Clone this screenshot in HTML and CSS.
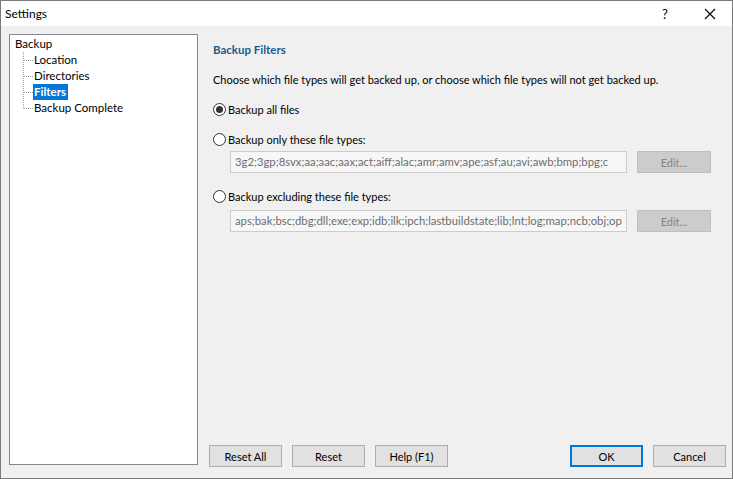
FILE: index.html
```html
<!DOCTYPE html>
<html>
<head>
<meta charset="utf-8">
<link rel="stylesheet" href="styles.css">
</head>
<body>
<div class="window">
  <div class="titlebar">
    <span class="title">Settings</span>
    <span class="help-btn">?</span>
    <span class="close-btn">
      <svg width="12" height="12" viewBox="0 0 12 12"><path d="M1 1L11 11M11 1L1 11" stroke="#000" stroke-width="1.1" fill="none"/></svg>
    </span>
  </div>
  <div class="body">
    <div class="tree">
      <div class="node root">Backup</div>
      <div class="children">
        <div class="node child"><span class="hline"></span><span class="lbl">Location</span></div>
        <div class="node child"><span class="hline"></span><span class="lbl">Directories</span></div>
        <div class="node child"><span class="hline"></span><span class="lbl selected">Filters</span></div>
        <div class="node child last"><span class="hline"></span><span class="lbl">Backup Complete</span></div>
      </div>
    </div>
    <div class="panel">
      <div class="content">
        <div class="heading">Backup Filters</div>
        <div class="desc">Choose which file types will get backed up, or choose which file types will not get backed up.</div>
        <div class="radio-row r1"><span class="radio checked"></span><span>Backup all files</span></div>
        <div class="radio-row r2"><span class="radio"></span><span>Backup only these file types:</span></div>
        <div class="field-row f1">
          <div class="textbox">3g2;3gp;8svx;aa;aac;aax;act;aiff;alac;amr;amv;ape;asf;au;avi;awb;bmp;bpg;c</div>
          <div class="btn disabled">Edit...</div>
        </div>
        <div class="radio-row r3"><span class="radio"></span><span>Backup excluding these file types:</span></div>
        <div class="field-row f2">
          <div class="textbox">aps;bak;bsc;dbg;dll;exe;exp;idb;ilk;ipch;lastbuildstate;lib;lnt;log;map;ncb;obj;op</div>
          <div class="btn disabled">Edit...</div>
        </div>
      </div>
      <div class="footer">
        <div class="btn">Reset All</div>
        <div class="btn">Reset</div>
        <div class="btn">Help (F1)</div>
        <div class="spacer"></div>
        <div class="btn default">OK</div>
        <div class="btn">Cancel</div>
      </div>
    </div>
  </div>
</div>
</body>
</html>
```
FILE: styles.css
```css
* { box-sizing: border-box; }
html, body { margin: 0; padding: 0; }
body {
  font-family: "Lato", "Liberation Sans", sans-serif;
  font-size: 11px;
  color: #000;
  background: #fff;
}
.window {
  width: 733px;
  height: 479px;
  border: 1px solid #7a7a7a;
  display: flex;
  flex-direction: column;
  overflow: hidden;
}
.titlebar {
  height: 25px;
  background: #fff;
  display: flex;
  align-items: center;
  flex-shrink: 0;
}
.title {
  padding-left: 4px;
  font-size: 12px;
  flex: 1;
}
.help-btn {
  width: 14px;
  font-size: 13px;
  margin-right: 32px;
  text-align: center;
}
.close-btn {
  width: 12px;
  height: 12px;
  margin-right: 16px;
  display: flex;
}
.body {
  flex: 1;
  background: #f0f0f0;
  display: flex;
  padding: 8px 6px 10px 8px;
  min-width: 0;
}
.tree {
  width: 189px;
  flex-shrink: 0;
  margin-bottom: 3px;
  background: #fff;
  border: 1px solid #828790;
  padding: 1px 0 0 5px;
  line-height: 16px;
  font-size: 11.5px;
}
.node { height: 16px; white-space: nowrap; }
.children {
  margin-left: 8px;
  position: relative;
}
.children::before {
  content: "";
  position: absolute;
  left: 0;
  top: 0;
  height: 57px;
  border-left: 1px dotted #a0a0a0;
}
.child { display: flex; align-items: center; }
.hline {
  width: 9px;
  margin-left: 1px;
  border-top: 1px dotted #a0a0a0;
}
.lbl { padding: 0 1px; }
.selected {
  background: #0078d7;
  color: #fff;
  font-weight: bold;
  padding: 0 2px 0 1px;
}
.panel {
  flex: 1;
  min-width: 0;
  margin-left: 11px;
  display: flex;
  flex-direction: column;
}
.content {
  flex: 1;
  padding-left: 4px;
}
.heading {
  margin-top: 8px;
  line-height: 16px;
  font-weight: bold;
  font-size: 11.5px;
  color: #1b5a8c;
}
.desc {
  margin-top: 14px;
  line-height: 16px;
  white-space: nowrap;
}
.radio-row {
  display: flex;
  align-items: center;
  height: 16px;
  margin-top: 13px;
  gap: 2px;
}
.radio-row.r2 { margin-top: 14px; }
.radio-row.r3 { margin-top: 15px; }
.radio {
  width: 13px;
  height: 13px;
  border: 1px solid #333;
  border-radius: 50%;
  background: #fff;
  display: flex;
  align-items: center;
  justify-content: center;
}
.radio.checked::after {
  content: "";
  width: 7px;
  height: 7px;
  border-radius: 50%;
  background: #333;
}
.field-row {
  display: flex;
  margin-left: 17px;
  gap: 10px;
  margin-top: 4px;
}
.field-row.f2 { margin-top: 6px; }
.textbox {
  width: 397px;
  height: 22px;
  border: 1px solid #cccccc;
  background: #f7f7f7;
  color: #6d6d6d;
  line-height: 20px;
  padding: 0 4px;
  font-size: 11.3px;
  white-space: nowrap;
  overflow: hidden;
}
.btn {
  width: 73px;
  height: 22px;
  background: #e1e1e1;
  border: 1px solid #adadad;
  display: flex;
  align-items: center;
  justify-content: center;
  flex-shrink: 0;
}
.btn.disabled {
  background: #cccccc;
  border-color: #bfbfbf;
  color: #838383;
  width: 74px;
}
.btn.default {
  border: 2px solid #0078d7;
}
.footer {
  display: flex;
  gap: 10px;
  height: 22px;
  margin-bottom: 1px;
}
.footer .spacer { flex: 1; }
```
